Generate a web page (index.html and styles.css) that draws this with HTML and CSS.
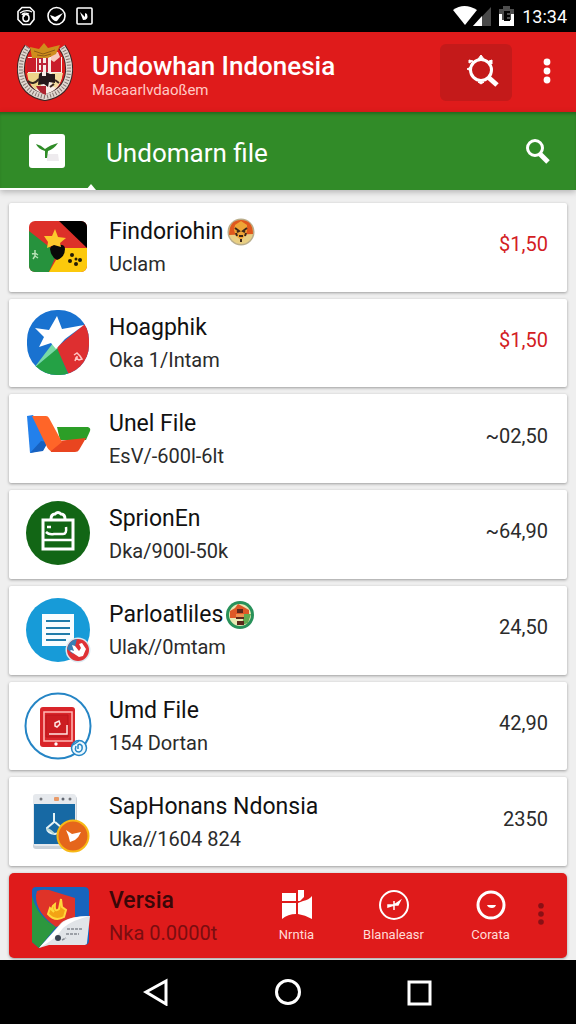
FILE: index.html
```html
<!DOCTYPE html>
<html lang="id">
<head>
    <meta charset="UTF-8">
    <meta name="viewport" content="width=device-width, initial-scale=1.0">
    <title>Undowhan Indonesia</title>
    <link rel="stylesheet" href="styles.css">
</head>
<body>
    <div class="status-bar">
        <svg width="78" height="20" viewBox="0 0 78 20" fill="none" stroke="#fff" stroke-width="1.6">
            <path d="M6 1.5h8l4 4v8l-4 5H7l-5-5v-8z"/>
            <path d="M4 7q6-4 12-1M6 9q1-3 7-1M8 7v4" stroke-width="1.3"/>
            <ellipse cx="10" cy="12" rx="3" ry="3.5"/>
            <circle cx="40.500" cy="10" r="8.500"/>
            <path d="M34 9l3 1 2 1 8-4-6 8q-4 1-7-6z" fill="#fff" stroke="none"/>
            <rect x="61" y="2" width="15" height="16" rx="1"/>
            <path d="M64 6l3 8q6 0 4-6l-2-1v4z" fill="#fff" stroke="none"/>
        </svg>
        <div class="status-right">
            <svg width="62" height="22" viewBox="0 0 62 22">
                <path d="M0 5Q11-3 24 5L12 20z" fill="#fff"/>
                <path d="M20 21L38 2v19z" fill="#4a4a4a"/>
                <path d="M20 21L29 11v10z" fill="#fff"/>
                <path d="M46 4h4V1h7v3h4v17H46z" fill="#4d4d4d"/>
                <path d="M46 15h15v6H46zM46 9h3v12h-3zM58 9h3v12h-3z" fill="#fff"/>
                <path d="M51 6h6v2h-3v2h3v2h-3v2h3v2h-6z" fill="#000"/>
            </svg>
            <span class="clock">13:34</span>
        </div>
    </div>

    <header class="app-bar">
        <svg class="emblem" width="56" height="58" viewBox="0 0 56 58">
            <path d="M11 4Q3 15 4 29q2 21 24 25 22-4 24-25 1-14-7-25" fill="none" stroke="#3c2524" stroke-width="8"/>
            <path d="M11 4Q3 15 4 29q2 21 24 25 22-4 24-25 1-14-7-25" fill="none" stroke="#e1d7d0" stroke-width="6"/>
            <path d="M11 4Q3 15 4 29q2 21 24 25 22-4 24-25 1-14-7-25" fill="none" stroke="#837570" stroke-width="4" stroke-dasharray="1 2"/>
            <path d="M11 14h34v20q-3 14-17 17-14-3-17-17z" fill="#f8eee7"/>
            <path d="M10 15h9v14h-9zM34 7l10 7v15H34z" fill="#c91d2a"/>
            <path d="M34 9h7l2 5-6 5-3-2z" fill="#f8c9bd"/>
            <path d="M10 30h14v15l-6 1q-7-6-8-16z" fill="#eed489"/>
            <path d="M35 30h11q-2 10-7 15l-4-2z" fill="#f3dda1"/>
            <path d="M19 43h10v9q-7-2-10-9z" fill="#ae2430"/>
            <path d="M22 31l3-2v4h4v-4l4 2h5v9l-6-1-1 5-4-3-6 1z" fill="#24191a"/>
            <path d="M11 38q5 5 11-2M38 37l4 3M33 44l4-3" stroke="#382720" stroke-width="2" fill="none"/>
            <path d="M21 15h4v13h-4zM20 21h10M30 15v14" stroke="#bd2739" stroke-width="2" fill="none"/>
            <path d="M13 4l9 2 5-6 4 5 12-3-4 9-8 4H15z" fill="#cf8d1c"/>
            <path d="M17 8l9 3 12-4M20 12l7 1 7-2" stroke="#8d5b15" stroke-width="1" fill="none"/>
        </svg>
        <div class="app-title">
            <h1>Undowhan Indonesia</h1>
            <p>Macaarlvdaoßem</p>
        </div>
        <button class="settings-btn" type="button" aria-label="Cari pengaturan">
            <svg width="36" height="36" viewBox="0 0 36 36" fill="none" stroke="#fff">
                <circle cx="17" cy="16" r="10.500" stroke-width="3"/>
                <path d="M24 23l9 8" stroke-width="5"/>
                <path d="M14 5l3-4 3 4zM5 9V6l4 1zM25 7l3-1v4zM3 15l4-2v4zM14 28h6l-3 2z" fill="#fff"/>
            </svg>
        </button>
        <button class="more-btn" type="button" aria-label="Menu">
            <svg width="8" height="28" viewBox="0 0 8 28" fill="#fff">
                <circle cx="4" cy="4" r="3.400"/><circle cx="4" cy="13" r="3.400"/><circle cx="4" cy="22" r="3.400"/>
            </svg>
        </button>
    </header>

    <div class="tab-bar">
        <svg width="36" height="34" viewBox="0 0 36 34">
            <rect width="36" height="34" rx="3" fill="#fff"/>
            <path d="M18 20h11l1 7H18z" fill="#eeebee"/>
            <path d="M7 10q5 1 9 5 5-4 13-6-4 6-10 8l-1 7h-2v-7q-7-2-9-7z" fill="#2f8c27"/>
        </svg>
        <h2>Undomarn file</h2>
        <button class="search-btn" type="button" aria-label="Cari">
            <svg width="28" height="28" viewBox="0 0 28 28" fill="none" stroke="#fff">
                <circle cx="11" cy="11" r="7.500" stroke-width="3"/>
                <path d="M16 17l8 8" stroke-width="5"/>
            </svg>
        </button>
    </div>

    <main class="file-list">
        <article class="card">
            <svg class="icon" viewBox="0 0 68 68">
                <clipPath id="flagClip"><rect x="5" y="8" width="58" height="51" rx="6"/></clipPath>
                <g clip-path="url(#flagClip)">
                    <path d="M5 8h58v51H5z" fill="#dd3029"/>
                    <path d="M35 8h28v27z" fill="#000"/>
                    <path d="M5 18l28 22-8 19H5z" fill="#26923d"/>
                    <path d="M25 59l14-24h24v24z" fill="#fcc90c"/>
                </g>
                <path d="M26 36q1-5 8-4 7-1 7 4 0 8-8 11-6-3-7-11z" fill="#090909"/>
                <path d="M31 16l3 8 8 1-6 5 1 4-7-2-7 3 1-6-4-6h8z" fill="#fdc82c"/>
                <path d="M8 41l3-1 3 2M11 37v6l-2 3M11 43l3 2" fill="none" stroke="#b7e2b5" stroke-width="1.500"/>
                <g fill="#211c08">
                    <circle cx="48" cy="42" r="2"/><circle cx="46" cy="48" r="2"/><circle cx="52" cy="51" r="2"/>
                    <circle cx="56" cy="47" r="2"/><circle cx="52" cy="46" r="1.500"/>
                </g>
            </svg>
            <div class="info">
                <h3>Findoriohin
                    <svg class="badge" viewBox="0 0 28 28">
                        <circle cx="14" cy="14" r="13.500" fill="#b9ad8b"/>
                        <circle cx="14" cy="14" r="12" fill="#e9cf83"/>
                        <path d="M2 17Q2 2 14 2t12 14z" fill="#df581d"/>
                        <path d="M8 7l6-4 6 4v6l-2 5-4 4-5-4-2-6z" fill="#efa536"/>
                        <path d="M8 10l4 3-2 1M20 10l-4 3 2 1M9 15l1 3M19 15l-1 3M12 18h4M14 21v3" fill="none" stroke="#3c261a" stroke-width="2"/>
                    </svg>
                </h3>
                <p>Uclam</p>
            </div>
            <span class="price due">$1,50</span>
        </article>

        <article class="card">
            <svg class="icon" viewBox="0 0 68 68">
                <clipPath id="starClip"><rect x="3" y="1" width="62" height="65" rx="30"/></clipPath>
                <g clip-path="url(#starClip)">
                    <path d="M0 0h68v68H0z" fill="#1972d0"/>
                    <path d="M32 39L62 14l6 3v51H46z" fill="#de2f30"/>
                    <path d="M10 59l23-20 12 28H10z" fill="#24a145"/>
                    <path d="M10 59l19-25 5 5z" fill="#78dba5"/>
                </g>
                <path d="M33 7l5 13 22-4-19 14-9 10-5-6-12 4 5-10-9-9 14 2z" fill="#fff"/>
                <path d="M50 46l3-2 3 3 2 3-3 1-3-2-1 3M53 47v4" fill="none" stroke="#ffc5c2" stroke-width="1.500"/>
            </svg>
            <div class="info">
                <h3>Hoagphik</h3>
                <p>Oka 1/Intam</p>
            </div>
            <span class="price due">$1,50</span>
        </article>

        <article class="card">
            <svg class="icon" viewBox="0 0 68 68">
                <path d="M3 11l6-1 15 27-5 8-13 3z" fill="#2380eb"/>
                <path d="M6 48l11-12 7 1-5 9-13 2z" fill="#1761c0"/>
                <path d="M33 22h31q3 1 2 4l-4 9H36z" fill="#2c9e27"/>
                <path d="M24 37l38-4-7 12q-1 2-4 2H27z" fill="#e94520"/>
                <path d="M8 11h14q2 0 3 2l13 24-11 9q-3-1-5-6z" fill="#ff6528"/>
            </svg>
            <div class="info">
                <h3>Unel File</h3>
                <p>EsV/-600l-6lt</p>
            </div>
            <span class="price">~02,50</span>
        </article>

        <article class="card">
            <svg class="icon" viewBox="0 0 68 68">
                <circle cx="34" cy="33" r="32" fill="#126615"/>
                <path d="M19 20h30v29H19z" fill="none" stroke="#fff" stroke-width="3"/>
                <path d="M27 19q0-5 4-5 3-3 6 0 4 0 4 5" fill="none" stroke="#fff" stroke-width="3"/>
                <path d="M23 27h4M22 32q3 3 8 2h9q4 0 3-7M20 40h28" fill="none" stroke="#fff" stroke-width="2.500"/>
            </svg>
            <div class="info">
                <h3>SprionEn</h3>
                <p>Dka/900l-50k</p>
            </div>
            <span class="price">~64,90</span>
        </article>

        <article class="card">
            <svg class="icon" viewBox="0 0 68 68">
                <circle cx="34" cy="34" r="32" fill="#179bd8"/>
                <path d="M18 18h32v32H18z" fill="#f8fdff"/>
                <path d="M22 25h24M22 32h24M22 38h24M22 44h20" stroke="#207caa" stroke-width="2"/>
                <circle cx="54" cy="54" r="12.500" fill="#dbeaf2"/>
                <circle cx="54" cy="54" r="11" fill="#df3135"/>
                <path d="M43 53q2-9 10-10l-4 15z" fill="#387eb4"/>
                <path d="M48 49l3 1 4 5 2-3-2-4 3-1 4 6-3 7-4 1-9-6 1-1 3 1z" fill="#fff"/>
            </svg>
            <div class="info">
                <h3>Parloatliles
                    <svg class="badge" viewBox="0 0 28 28">
                        <circle cx="14" cy="14" r="14" fill="#28915a"/>
                        <circle cx="14" cy="14" r="11" fill="#e9e8b3"/>
                        <path d="M4 10l5-3 3-4 4 2 7 4v8H4z" fill="#de5827"/>
                        <path d="M18 13h7l-3 9-6 2z" fill="#62aa51"/>
                        <path d="M11 8h6v4h-6zM10 16h8v2h-8zM11 20h7v4h-7z" fill="#5d281c"/>
                        <path d="M10 13h8v3h-8zM11 18h6" fill="#ed9250"/>
                    </svg>
                </h3>
                <p>Ulak//0mtam</p>
            </div>
            <span class="price">24,50</span>
        </article>

        <article class="card">
            <svg class="icon" viewBox="0 0 68 68">
                <circle cx="34" cy="34" r="32.500" fill="#fff" stroke="#2585c5" stroke-width="2"/>
                <rect x="16" y="15" width="35" height="40" rx="3" fill="#d9252a"/>
                <path d="M20 20h28v29H20z" fill="none" stroke="#ffb9b5" stroke-width="1.500"/>
                <path d="M22 23h22v22H22z" fill="#cc1d22" stroke="#bd171c"/>
                <path d="M31 31l4-2 1 3-3 3-2-1zM25 42h18v-9" fill="none" stroke="#ffe5e2" stroke-width="1.500"/>
                <circle cx="32" cy="52" r="1.700" fill="#fff"/>
                <circle cx="55" cy="56" r="7.500" fill="#edf8fd" stroke="#2585c5" stroke-width="1.500"/>
                <path d="M52 54q-2 6 3 6 4-1 3-6-2-3-4-1v4M49 53l6-4" fill="none" stroke="#2585c5" stroke-width="1.500"/>
            </svg>
            <div class="info">
                <h3>Umd File</h3>
                <p>154 Dortan</p>
            </div>
            <span class="price">42,90</span>
        </article>

        <article class="card">
            <svg class="icon" viewBox="0 0 68 68">
                <rect x="9" y="8" width="44" height="53" rx="3" fill="#cbd2d9"/>
                <rect x="9" y="6" width="43" height="52" rx="3" fill="#e6e9ed"/>
                <path d="M10 16h41v40H10z" fill="#1769a4"/>
                <circle cx="17" cy="11" r="1.500" fill="#74777d"/>
                <rect x="30" y="9" width="5" height="4" rx="1" fill="#e99b69"/>
                <circle cx="39" cy="11" r="1.500" fill="#626872"/>
                <circle cx="46" cy="11" r="1.500" fill="#74777d"/>
                <path d="M30 25v9l-7 6q0 5 8 6 5-1 7-6l-7-6" fill="none" stroke="#e6f3f5" stroke-width="2"/>
                <path d="M23 41q4 1 7 5" stroke="#b8d8d3" stroke-width="2" fill="none"/>
                <circle cx="49" cy="48" r="15.500" fill="#e5661b" stroke="#f8b815" stroke-width="2"/>
                <path d="M42 42l6 4 9-2q-2 5-6 8l-5 2q-1-6-4-12z" fill="#fff"/>
            </svg>
            <div class="info">
                <h3>SapHonans Ndonsia</h3>
                <p>Uka//1604 824</p>
            </div>
            <span class="price">2350</span>
        </article>

        <article class="card card-active">
            <svg class="icon" viewBox="0 0 68 68">
                <path d="M12 5h48q5 0 5 5v49q0 4-5 4H20l-5 3-7-6V9q0-4 4-4z" fill="#1764bd"/>
                <path d="M8 14q5 20 24 31L15 66l-7-6z" fill="#2c973e"/>
                <path d="M13 9q5-2 12-1l26 8v22L32 45Q11 30 12 13z" fill="#df3328"/>
                <path d="M15 66l22-25q8-7 29-7l-3 27q0 2-4 2H25z" fill="#e1e4e8"/>
                <path d="M15 66l23-25q8-7 28-7-18 4-27 12-7 11-24 20z" fill="#fff"/>
                <path d="M26 26l-2 6q7 8 16 3l2-7-4-3-1-8-2 10q-5 4-4-5-5 3-1 8z" fill="#f3a315" stroke="#ffd83b" stroke-width="2"/>
                <circle cx="34" cy="56" r="3" fill="#394351"/>
                <path d="M43 47h16M42 52h13M38 58l4-2" stroke="#858991" stroke-width="1.500" stroke-dasharray="3 1"/>
            </svg>
            <div class="info">
                <h3>Versia</h3>
                <p>Nka 0.0000t</p>
            </div>
            <div class="actions">
                <button class="action" type="button">
                    <svg width="32" height="32" viewBox="0 0 32 32" fill="#fff">
                        <path d="M1 4h14v8H1zM17 1h6v7l-4 4h-2zM1 14h14v11q-8 0-14 5zM17 14l5-2q6-1 9-5v23q-7-4-14-5z"/>
                    </svg>
                    <span>Nrntia</span>
                </button>
                <button class="action" type="button">
                    <svg width="32" height="32" viewBox="0 0 32 32" fill="none" stroke="#fff" stroke-width="2">
                        <circle cx="16" cy="16" r="14"/>
                        <path d="M10 18v-2h6l6-4-2 4h-4l-6 2zM16 12v9" stroke-width="1.500" fill="#fff"/>
                    </svg>
                    <span>Blanaleasr</span>
                </button>
                <button class="action" type="button">
                    <svg width="32" height="32" viewBox="0 0 32 32" fill="none" stroke="#fff" stroke-width="3">
                        <circle cx="16" cy="16" r="13"/>
                        <path d="M12 16h9q-1 3-4 3-4 0-5-3z" fill="#fff" stroke="none"/>
                    </svg>
                    <span>Corata</span>
                </button>
                <button class="card-more" type="button" aria-label="Lainnya">
                    <svg width="8" height="26" viewBox="0 0 8 26" fill="#8a1015">
                        <circle cx="4" cy="2.800" r="2.800"/><circle cx="4" cy="11" r="2.800"/><circle cx="4" cy="19" r="2.800"/>
                    </svg>
                </button>
            </div>
        </article>
    </main>

    <nav class="nav-bar">
        <button type="button" aria-label="Kembali">
            <svg width="28" height="28" viewBox="0 0 28 28"><path d="M24 3v23L4 14z"/></svg>
        </button>
        <button type="button" aria-label="Beranda">
            <svg width="28" height="28" viewBox="0 0 28 28"><circle cx="14" cy="14" r="11.500"/></svg>
        </button>
        <button type="button" aria-label="Terbaru">
            <svg width="28" height="28" viewBox="0 0 28 28"><rect x="3" y="4" width="21" height="22"/></svg>
        </button>
    </nav>
</body>
</html>
```

FILE: styles.css
```css
* {
    box-sizing: border-box;
}
body {
    display: flex;
    flex-direction: column;
    min-height: 100vh;
    margin: 0;
    background-color: #efefef;
    color: #111;
    font-family: Roboto, "Liberation Sans", sans-serif;
}
h1, h2, h3, p {
    margin: 0;
    font-weight: normal;
}
button {
    display: flex;
    align-items: center;
    justify-content: center;
    padding: 0;
    border: none;
    background: none;
    color: inherit;
    font-family: inherit;
    cursor: pointer;
}
svg {
    display: block;
    flex-shrink: 0;
}
.status-bar {
    display: flex;
    align-items: center;
    justify-content: space-between;
    height: 32px;
    padding: 0 9px 0 16px;
    background-color: #000;
    color: #fff;
}
.status-right {
    display: flex;
    align-items: center;
    gap: 7px;
}
.clock {
    font-size: 18px;
}
.app-bar {
    display: flex;
    align-items: center;
    height: 80px;
    padding: 0 17px;
    background-color: #df1b1b;
    color: #fff;
}
.app-title {
    flex: 1;
    margin-left: 19px;
    padding-top: 7px;
}
.app-title h1 {
    font-size: 26px;
    font-weight: 500;
    line-height: 28px;
}
.app-title p {
    color: #ffc9c4;
    font-size: 15px;
    line-height: 20px;
}
.settings-btn {
    width: 72px;
    height: 57px;
    padding-left: 12px;
    border-radius: 6px;
    background-color: #c41a1a;
}
.more-btn {
    width: 24px;
    height: 48px;
    margin-left: 23px;
}
.tab-bar {
    position: relative;
    display: flex;
    align-items: center;
    height: 78px;
    padding: 0 24px 0 29px;
    background-color: #318b28;
    box-shadow: inset 0 3px 3px -1px rgba(0, 0, 0, 0.25), 0 2px 6px rgba(0, 0, 0, 0.25);
    color: #fff;
}
.tab-bar h2 {
    flex: 1;
    margin-left: 41px;
    padding-top: 4px;
    font-size: 26px;
}
/* selected tab line with its pointer */
.tab-bar::before {
    content: "";
    position: absolute;
    left: 0;
    bottom: 0;
    width: 92px;
    height: 2px;
    background-color: #fff;
}
.tab-bar::after {
    content: "";
    position: absolute;
    left: 86px;
    bottom: 0;
    border: 5px solid transparent;
    border-top: none;
    border-bottom: 6px solid #fff;
}
.file-list {
    flex: 1;
    display: grid;
    grid-template-rows: repeat(7, 1fr) 85px;
    gap: 7px;
    padding: 13px 9px 2px;
}
.card {
    display: flex;
    align-items: center;
    padding: 0 19px 0 15px;
    border-radius: 2px;
    background-color: #fff;
    box-shadow: 0 1px 3px rgba(0, 0, 0, 0.35);
}
.icon {
    width: 68px;
    height: 68px;
}
.info {
    flex: 1;
    margin-left: 17px;
    padding-top: 2px;
    white-space: nowrap;
}
.info h3 {
    display: flex;
    align-items: center;
    gap: 3px;
    font-size: 23px;
    line-height: 32px;
}
.info p {
    color: #2b2b2b;
    font-size: 20px;
    line-height: 32px;
}
.badge {
    width: 28px;
    height: 28px;
}
.price {
    padding-bottom: 6px;
    color: #2b2b2b;
    font-size: 20px;
}
.price.due {
    color: #d3201f;
}
.card-active {
    padding-right: 14px;
    border-radius: 5px;
    background-color: #df1b1b;
}
.card-active .info h3 {
    color: #3b0708;
    font-weight: 500;
}
.card-active .info p {
    color: #7b0d10;
}
.actions {
    display: flex;
    align-items: center;
}
.action {
    flex-direction: column;
    gap: 6px;
    width: 97px;
    color: #ffdcd8;
    font-size: 13px;
    line-height: 16px;
}
.card-more {
    width: 24px;
    height: 48px;
    margin-left: -10px;
}
.nav-bar {
    display: flex;
    align-items: center;
    justify-content: center;
    gap: 104px;
    height: 64px;
    background-color: #000;
}
.nav-bar svg {
    fill: none;
    stroke: #fff;
    stroke-width: 3;
}
```
